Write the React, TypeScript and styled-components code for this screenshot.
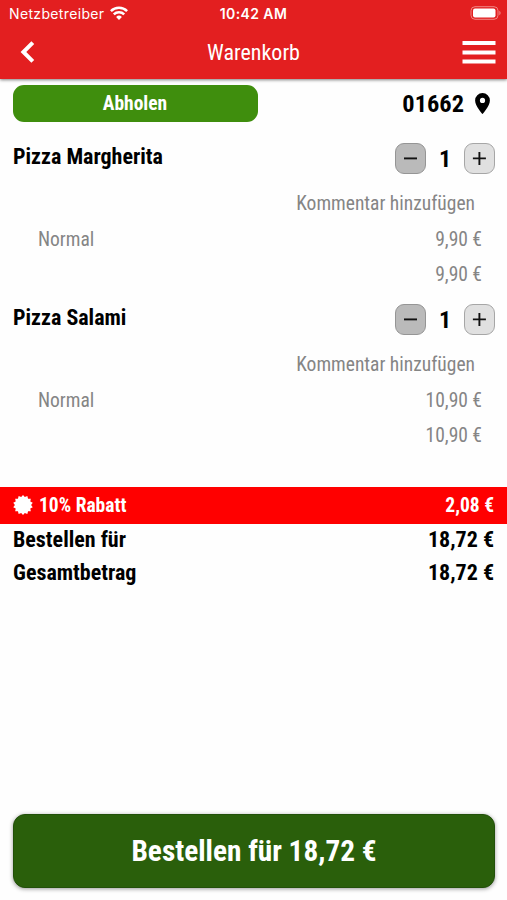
import React from 'react';
import styled, { createGlobalStyle } from 'styled-components';

const GlobalStyle = createGlobalStyle`
  * { box-sizing: border-box; }
  body { margin: 0; background: #fefefe; }
`;

const Screen = styled.div`
  width: 507px;
  height: 900px;
  display: flex;
  flex-direction: column;
  background: #fefefe;
  color: #000;
  font-family: 'Roboto Condensed', Roboto, sans-serif;
  font-stretch: 75%;
  overflow: hidden;
`;

const Label = styled.span<{ $size: number; $bold?: boolean }>`
  font-size: ${(p) => p.$size}px;
  font-weight: ${(p) => (p.$bold ? 700 : 400)};
  line-height: 1;
  white-space: nowrap;
`;

const Header = styled.header`
  flex: none;
  height: 79px;
  background: #e31f20;
  color: #fff;
  box-shadow: 0 1px 3px rgba(0, 0, 0, 0.5);
`;

const StatusBar = styled.div`
  display: grid;
  grid-template-columns: 1fr auto 1fr;
  align-items: center;
  height: 27px;
  padding: 0 6px 0 9px;
  font-family: Inter, sans-serif;
  font-stretch: 100%;
`;

const Carrier = styled.div`
  display: flex;
  align-items: center;
  gap: 6px;
`;

const WifiIcon = styled.svg`
  margin-bottom: 2px;
`;

const StatusText = styled.span<{ $bold?: boolean }>`
  font-size: 14px;
  font-weight: ${(p) => (p.$bold ? 600 : 400)};
  letter-spacing: ${(p) => (p.$bold ? 0.4 : 0.35)}px;
  margin-right: ${(p) => (p.$bold ? 3 : 0)}px;
`;

const Battery = styled.svg`
  justify-self: end;
  margin-bottom: 1px;
`;

const NavBar = styled.div`
  display: grid;
  grid-template-columns: 1fr auto 1fr;
  align-items: center;
  height: 50px;
  padding: 0 11px;
`;

const Title = styled(Label)`
  padding-top: 1px;
`;

const BackIcon = styled.svg`
  margin-left: 9px;
`;

const MenuIcon = styled.svg`
  justify-self: end;
`;

const PickupRow = styled.div`
  display: flex;
  justify-content: space-between;
  align-items: center;
  height: 37px;
  margin-top: 6px;
  padding: 0 17px 0 13px;
`;

const PickupButton = styled.button`
  width: 245px;
  height: 37px;
  padding: 0 1px 0 0;
  border: 0;
  border-radius: 11px;
  background: #3f8e0d;
  color: #fff;
  font-family: inherit;
  font-stretch: inherit;
`;

const Location = styled.div`
  display: flex;
  align-items: center;
  gap: 11px;
`;

const PostCode = styled(Label)`
  padding-top: 2px;
`;

const PinIcon = styled.svg`
  margin-bottom: 1px;
`;

const ItemList = styled.main`
  margin-top: 15px;
`;

const Item = styled.section`
  height: 161px;
`;

const ItemHead = styled.div`
  display: flex;
  justify-content: space-between;
  height: 49px;
  padding: 5px 12px 0 13px;
`;

const ItemName = styled(Label)`
  margin-top: 4px;
`;

const Stepper = styled.div`
  display: grid;
  grid-template-columns: 31px 38px 31px;
  align-items: center;
  justify-items: center;
  height: 31px;
  margin-top: 1px;
`;

const StepButton = styled.button<{ $dark?: boolean }>`
  display: grid;
  place-items: center;
  width: 31px;
  height: 31px;
  padding: 0 1px 1px 0;
  border: 1px solid ${(p) => (p.$dark ? '#959595' : '#a6a6a6')};
  border-radius: 9px;
  background: ${(p) => (p.$dark ? '#bababa' : '#e0e0e0')};
`;

const DetailRow = styled.div<{ $inset?: number }>`
  display: flex;
  justify-content: space-between;
  align-items: center;
  height: 35.5px;
  padding: 0 ${(p) => p.$inset ?? 25}px 0 38px;
  color: #858585;
`;

const Spacer = styled.span`
  flex: 1;
`;

const DiscountBar = styled.div`
  display: flex;
  align-items: center;
  justify-content: space-between;
  height: 37px;
  margin-top: 28px;
  padding: 0 13px;
  background: #f00;
  color: #fff;
`;

const Discount = styled.div`
  display: flex;
  align-items: center;
  gap: 6px;
`;

const BadgeIcon = styled.svg`
  margin-bottom: 2px;
`;

const TotalRow = styled.div`
  display: flex;
  justify-content: space-between;
  align-items: center;
  height: 33px;
  padding: 0 13px 2px;
`;

const OrderButton = styled.button`
  height: 74px;
  margin: auto 12px 12px 13px;
  padding: 2px 0 0;
  border: 1px solid #22500a;
  border-radius: 12px;
  background: #2a5f0b;
  color: #fff;
  font-family: inherit;
  font-stretch: inherit;
  box-shadow: 0 1px 4px rgba(0, 0, 0, 0.4);
`;

const starPoints = Array.from({ length: 28 }, (_, i) => {
  const r = i % 2 ? 8.1 : 10;
  const a = (i * Math.PI) / 14;
  return `${(10 + r * Math.sin(a)).toFixed(2)},${(10 - r * Math.cos(a)).toFixed(2)}`;
}).join(' ');

const items = [
  { name: 'Pizza Margherita', price: '9,90 €' },
  { name: 'Pizza Salami', price: '10,90 €' },
];

const totals = ['Bestellen für', 'Gesamtbetrag'];

export default function App() {
  return (
    <Screen>
      <GlobalStyle />
      <Header>
        <StatusBar>
          <Carrier>
            <StatusText>Netzbetreiber</StatusText>
            <WifiIcon width="18" height="14" viewBox="0 0 18 14" fill="none" stroke="#fff" strokeWidth="2.5">
              <path d="M.9 5.1a11.5 11.5 0 0 1 16.2 0" />
              <path d="M3.8 8.4a7.4 7.4 0 0 1 10.4 0" />
              <path d="M9 13.9 6.1 10.9a4.1 4.1 0 0 1 5.8 0Z" fill="#fff" stroke="none" />
            </WifiIcon>
          </Carrier>
          <StatusText $bold>10:42 AM</StatusText>
          <Battery width="37" height="14" viewBox="-6 0 37 14">
            <rect x="1" y=".7" width="27" height="12.6" rx="4" fill="none" stroke="#f08583" strokeWidth="1" />
            <rect x="3" y="2.5" width="22.5" height="9" rx="2" fill="#fff" />
            <path d="M29.3 4.8a2.5 2.5 0 0 1 0 4.4Z" fill="#f08583" />
          </Battery>
        </StatusBar>
        <NavBar>
          <BackIcon width="15" height="22" viewBox="0 0 15 22" fill="none" stroke="#fff" strokeWidth="4">
            <path d="M12.8 1.6 3.4 11l9.4 9.4" />
          </BackIcon>
          <Title $size={22}>Warenkorb</Title>
          <MenuIcon width="34" height="23" viewBox="0 0 34 23" fill="#fff">
            <path d="M.5 0h33v4H.5zM.5 9.4h33v4H.5zM.5 18.5h33v4H.5z" />
          </MenuIcon>
        </NavBar>
      </Header>

      <PickupRow>
        <PickupButton><Label $size={19.5} $bold>Abholen</Label></PickupButton>
        <Location>
          <PostCode $size={24.4} $bold>01662</PostCode>
          <PinIcon width="15" height="21" viewBox="0 0 15 21">
            <path fillRule="evenodd" d="M7.5 0A7.4 7.4 0 0 0 .1 7.4C.1 12.8 7.5 21 7.5 21s7.4-8.2 7.4-13.6A7.4 7.4 0 0 0 7.5 0Zm0 4.8a2.6 2.6 0 1 1 0 5.2 2.6 2.6 0 0 1 0-5.2Z" />
          </PinIcon>
        </Location>
      </PickupRow>

      <ItemList>
        {items.map((item) => (
          <Item key={item.name}>
            <ItemHead>
              <ItemName $size={22} $bold>{item.name}</ItemName>
              <Stepper>
                <StepButton $dark aria-label="Weniger">
                  <svg width="14" height="14" stroke="#111" strokeWidth="1.9"><path d="M1 7.4h13" /></svg>
                </StepButton>
                <Label $size={24} $bold>1</Label>
                <StepButton aria-label="Mehr">
                  <svg width="14" height="14" stroke="#111" strokeWidth="1.9"><path d="M.9 7.4h13M7.4 .9v13" /></svg>
                </StepButton>
              </Stepper>
            </ItemHead>
            <DetailRow $inset={32}><Spacer /><Label $size={19.5}>Kommentar hinzufügen</Label></DetailRow>
            <DetailRow><Label $size={19.5}>Normal</Label><Label $size={19.5}>{item.price}</Label></DetailRow>
            <DetailRow><Spacer /><Label $size={19.5}>{item.price}</Label></DetailRow>
          </Item>
        ))}
      </ItemList>

      <DiscountBar>
        <Discount>
          <BadgeIcon width="20" height="20"><polygon points={starPoints} fill="#fff" /></BadgeIcon>
          <Label $size={19.5} $bold>10% Rabatt</Label>
        </Discount>
        <Label $size={19.5} $bold>2,08 €</Label>
      </DiscountBar>
      {totals.map((name) => (
        <TotalRow key={name}>
          <Label $size={22} $bold>{name}</Label>
          <Label $size={22} $bold>18,72 €</Label>
        </TotalRow>
      ))}

      <OrderButton><Label $size={29.3} $bold>Bestellen für 18,72 €</Label></OrderButton>
    </Screen>
  );
}
